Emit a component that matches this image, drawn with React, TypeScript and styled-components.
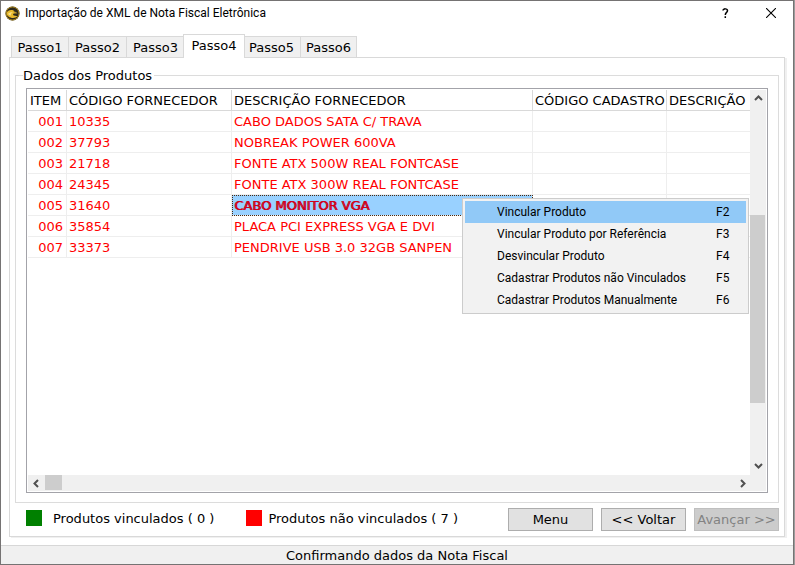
import React from "react";
import styled, { createGlobalStyle, css } from "styled-components";

const GlobalStyle = createGlobalStyle`
  *, *::before, *::after { box-sizing: border-box; }
  html, body, #root { height: 100%; margin: 0; }
  body { overflow: hidden; background: #a0a0a0; }
  body, button, table {
    font-family: "DejaVu Sans", Verdana, sans-serif;
    font-size: 13px;
    line-height: 18px;
    color: #000;
  }
`;

const Desktop = styled.div`
  height: 100%;
  padding-right: 1px;
  background: #9c9c9c;
`;

const Window = styled.main`
  display: flex;
  flex-direction: column;
  height: 100%;
  border: 1px solid #757373;
  background: #fff;
`;

const TitleBar = styled.header`
  display: flex;
  align-items: center;
  flex: none;
  height: 24px;
  padding-left: 4px;
  gap: 5px;
`;

const Title = styled.h1`
  flex: 1;
  margin: 0;
  font: 400 12px/16px Roboto, "Segoe UI", sans-serif;
  white-space: nowrap;
`;

const CaptionButton = styled.button`
  display: flex;
  align-items: center;
  justify-content: center;
  width: 45px;
  height: 24px;
  padding: 0;
  border: 0;
  background: none;
`;

const CaptionActions = styled.div`
  display: flex;
`;

const Body = styled.div`
  display: flex;
  flex-direction: column;
  flex: 1;
  min-height: 0;
  padding: 8px;
`;

const TabList = styled.div`
  display: flex;
  align-items: flex-end;
  flex: none;
  height: 24px;
  padding-left: 2px;
`;

const Tab = styled.button<{ $active: boolean }>`
  width: 58px;
  height: 21px;
  padding: 2px 0 0;
  border: 1px solid #d9d9d9;
  border-width: 1px 1px 0 0;
  background: #f0f0f0;
  white-space: nowrap;
  &:first-child { border-left-width: 1px; }
  &:last-child { width: 56px; }
  ${(p) =>
    p.$active &&
    css`
      z-index: 1;
      width: 62px;
      height: 24px;
      margin: 0 -2px -1px;
      padding: 0 0 1px;
      border-left-width: 1px;
      background: #fff;
    `}
`;

const TabPage = styled.section`
  display: flex;
  flex-direction: column;
  flex: 1;
  min-height: 0;
  padding: 8px 5px 5px;
  border: 1px solid #d9d9d9;
  box-shadow: 2px 1px 0 #f0f0f0;
`;

const Group = styled.fieldset`
  display: flex;
  flex: 1;
  min-width: 0;
  min-height: 0;
  margin: 0;
  padding: 4px 10px 9px;
  border: 1px solid #dcdcdc;
`;

const GroupTitle = styled.legend`
  margin-left: -3px;
  padding: 2px 2px 0 0;
  line-height: 16px;
`;

const Grid = styled.div`
  position: relative;
  display: grid;
  grid-template: minmax(0, 1fr) 16px / minmax(0, 1fr) 16px;
  flex: 1;
  min-width: 0;
  min-height: 0;
  padding: 1px;
  border: 1px solid #a3a3a9;
`;

const Viewport = styled.div`
  overflow: hidden;
`;

const Table = styled.table`
  width: 100%;
  table-layout: fixed;
  border-collapse: separate;
  border-spacing: 0;
`;

const Col = styled.col<{ $w?: number }>`
  width: ${(p) => (p.$w ? `${p.$w}px` : "auto")};
`;

const HeadCell = styled.th`
  height: 21px;
  padding: 2px 0 0 2px;
  border: solid #d9d9d9;
  border-width: 0 1px 1px 0;
  font-weight: 400;
  line-height: 18px;
  text-align: left;
  white-space: nowrap;
  &:last-child { border-right: 0; }
`;

const Cell = styled.td<{ $end?: boolean; $selected?: boolean }>`
  height: 21px;
  padding: ${(p) => (p.$end ? "2px 3px 0 0" : "2px 0 0 2px")};
  border: solid #eeeeee;
  border-width: 0 1px 1px 0;
  color: #f00;
  line-height: 18px;
  text-align: ${(p) => (p.$end ? "right" : "left")};
  white-space: nowrap;
  &:last-child { border-right: 0; }
  ${(p) =>
    p.$selected &&
    css`
      background: #99d1ff;
      color: #d4001a;
      text-shadow: 1px 0 0 #c00018;
      outline: 1px dotted #4a2a10;
      outline-offset: -1px;
    `}
`;

const ScrollBar = styled.div<{ $horizontal?: boolean }>`
  display: flex;
  flex-direction: ${(p) => (p.$horizontal ? "row" : "column")};
  padding-bottom: ${(p) => (p.$horizontal ? 0 : "2px")};
  background: #f0f0f0;
`;

const ScrollArrow = styled.button`
  display: flex;
  align-items: center;
  justify-content: center;
  flex: none;
  width: 16px;
  height: 16px;
  padding: 0;
  border: 0;
  background: none;
`;

const ScrollTrack = styled.div<{ $horizontal?: boolean }>`
  display: flex;
  flex-direction: ${(p) => (p.$horizontal ? "row" : "column")};
  flex: 1;
`;

const TrackSpace = styled.div<{ $grow: number }>`
  flex: ${(p) => p.$grow} 0 0;
`;

const ThumbY = styled.div`
  flex: 188 0 0;
  margin-right: 1px;
  background: #cdcdcd;
`;

const ThumbX = styled.div`
  width: 17px;
  height: 15px;
  margin-left: 1px;
  background: #cdcdcd;
`;

const Corner = styled.div`
  background: #f0f0f0;
`;

const Menu = styled.ul`
  position: absolute;
  top: 109px;
  left: 435px;
  width: 287px;
  margin: 0;
  padding: 2px;
  border: 1px solid #cccccc;
  background: #f2f2f2;
  list-style: none;
`;

const MenuItem = styled.button<{ $active: boolean }>`
  display: flex;
  align-items: center;
  width: 100%;
  height: 22px;
  padding: 0 0 0 32px;
  border: 0;
  background: ${(p) => (p.$active ? "#91c9f7" : "transparent")};
  font: 400 12px/16px Roboto, "Segoe UI", sans-serif;
  text-align: left;
`;

const MenuLabel = styled.span`
  flex: 1;
  white-space: nowrap;
`;

const Shortcut = styled.span`
  width: 30px;
`;

const Footer = styled.footer`
  display: flex;
  align-items: flex-start;
  flex: none;
  gap: 32px;
  margin-top: 5px;
  padding-left: 11px;
`;

const LegendItem = styled.div<{ $gap: number }>`
  display: flex;
  align-items: center;
  gap: ${(p) => p.$gap}px;
  height: 20px;
  white-space: nowrap;
`;

const LegendText = styled.span`
  padding-top: 2px;
`;

const Swatch = styled.span<{ $color: string }>`
  width: 16px;
  height: 16px;
  background: ${(p) => p.$color};
`;

const Actions = styled.div`
  display: flex;
  gap: 8px;
  margin-left: auto;
`;

const ActionButton = styled.button`
  width: 85px;
  height: 23px;
  padding: 0;
  border: 1px solid #adadad;
  background: #e1e1e1;
  white-space: nowrap;
  &:disabled {
    border-color: #bfbfbf;
    background: #cccccc;
    color: #838383;
  }
`;

const StatusBar = styled.div`
  flex: none;
  height: 19px;
  border-top: 1px solid #d7d7d7;
  background: #f0f0f0;
  line-height: 19px;
  text-align: center;
`;

const chevrons = {
  up: "M1 6 4.5 2.5 8 6",
  down: "M1 3 4.5 6.5 8 3",
  left: "M6 1 2.5 4.5 6 8",
  right: "M3 1 6.5 4.5 3 8",
};

function Arrow({ dir, label }: { dir: keyof typeof chevrons; label: string }) {
  return (
    <ScrollArrow type="button" aria-label={label}>
      <svg width="9" height="9" viewBox="0 0 9 9" fill="none" stroke="#505050" strokeWidth="2">
        <path d={chevrons[dir]} />
      </svg>
    </ScrollArrow>
  );
}

function AppIcon() {
  return (
    <svg width="15" height="15" viewBox="0 0 15 15" aria-hidden="true">
      <circle cx="7.5" cy="7.5" r="7" fill="#2e2a1c" />
      <circle cx="7.5" cy="7.5" r="6.5" fill="none" stroke="#a8841c" strokeWidth="1" />
      <path d="M1.5 7C2.5 4.500 5.500 3.500 8.500 4.500L12.500 7.200 9 7.500C7.800 7.800 7.800 8.800 8.800 9.500L12.500 10.300C10.500 12.500 6 12.500 3.500 10.500 2.200 9.500 1.500 8.500 1.500 7Z" fill="#e8b92a" />
      <path d="M3 7.800C4 6.500 6 6 8 6.200 6 7 5.500 8 6 9.500 4.500 9.500 3.500 9 3 7.800Z" fill="#f7e08a" />
      <path d="M8.500 5.500h2l1 .8H9.500Z" fill="#2e2a1c" />
    </svg>
  );
}

const tabs = ["Passo1", "Passo2", "Passo3", "Passo4", "Passo5", "Passo6"];

const columns = [
  { title: "ITEM", width: 39 },
  { title: "CÓDIGO FORNECEDOR", width: 165 },
  { title: "DESCRIÇÃO FORNECEDOR", width: 301 },
  { title: "CÓDIGO CADASTRO", width: 134 },
  { title: "DESCRIÇÃO" },
];

const products = [
  ["001", "10335", "CABO DADOS SATA C/ TRAVA"],
  ["002", "37793", "NOBREAK POWER 600VA"],
  ["003", "21718", "FONTE ATX 500W REAL FONTCASE"],
  ["004", "24345", "FONTE ATX 300W REAL FONTCASE"],
  ["005", "31640", "CABO MONITOR VGA"],
  ["006", "35854", "PLACA PCI EXPRESS VGA E DVI"],
  ["007", "33373", "PENDRIVE USB 3.0 32GB SANPEN"],
];

const menuItems = [
  ["Vincular Produto", "F2"],
  ["Vincular Produto por Referência", "F3"],
  ["Desvincular Produto", "F4"],
  ["Cadastrar Produtos não Vinculados", "F5"],
  ["Cadastrar Produtos Manualmente", "F6"],
];

export default function App() {
  return (
    <Desktop>
      <GlobalStyle />
      <Window>
        <TitleBar>
          <AppIcon />
          <Title>Importação de XML de Nota Fiscal Eletrônica</Title>
          <CaptionActions>
            <CaptionButton type="button" aria-label="Ajuda">
              <svg width="7" height="10" viewBox="0 0 7 10" fill="none" stroke="#000" strokeWidth="1.5">
                <path d="M1 2.500C1 .3 5.500.3 5.500 2.700 5.500 4.500 3.300 4.300 3.300 7M3.300 8.200V10" />
              </svg>
            </CaptionButton>
            <CaptionButton type="button" aria-label="Fechar">
              <svg width="10" height="10" viewBox="0 0 10 10" fill="none" stroke="#000" strokeWidth="1.1">
                <path d="M0 0 10 10M10 0 0 10" />
              </svg>
            </CaptionButton>
          </CaptionActions>
        </TitleBar>
        <Body>
          <TabList role="tablist">
            {tabs.map((t) => (
              <Tab key={t} type="button" role="tab" aria-selected={t === "Passo4"} $active={t === "Passo4"}>
                {t}
              </Tab>
            ))}
          </TabList>
          <TabPage role="tabpanel">
            <Group>
              <GroupTitle>Dados dos Produtos</GroupTitle>
              <Grid>
                <Viewport>
                  <Table>
                    <colgroup>
                      {columns.map((c) => (
                        <Col key={c.title} $w={c.width} />
                      ))}
                    </colgroup>
                    <thead>
                      <tr>
                        {columns.map((c) => (
                          <HeadCell key={c.title} scope="col">{c.title}</HeadCell>
                        ))}
                      </tr>
                    </thead>
                    <tbody>
                      {products.map(([item, code, description]) => (
                        <tr key={item}>
                          <Cell $end>{item}</Cell>
                          <Cell>{code}</Cell>
                          <Cell $selected={item === "005"}>{description}</Cell>
                          <Cell />
                          <Cell />
                        </tr>
                      ))}
                    </tbody>
                  </Table>
                </Viewport>
                <ScrollBar>
                  <Arrow dir="up" label="Rolar para cima" />
                  <ScrollTrack>
                    <TrackSpace $grow={109} />
                    <ThumbY />
                    <TrackSpace $grow={54} />
                  </ScrollTrack>
                  <Arrow dir="down" label="Rolar para baixo" />
                </ScrollBar>
                <ScrollBar $horizontal>
                  <Arrow dir="left" label="Rolar para a esquerda" />
                  <ScrollTrack $horizontal>
                    <ThumbX />
                  </ScrollTrack>
                  <Arrow dir="right" label="Rolar para a direita" />
                </ScrollBar>
                <Corner />
                <Menu role="menu">
                  {menuItems.map(([label, key], i) => (
                    <li key={key} role="none">
                      <MenuItem type="button" role="menuitem" $active={i === 0}>
                        <MenuLabel>{label}</MenuLabel>
                        <Shortcut>{key}</Shortcut>
                      </MenuItem>
                    </li>
                  ))}
                </Menu>
              </Grid>
            </Group>
            <Footer>
              <LegendItem $gap={11}>
                <Swatch $color="#008000" />
                <LegendText>Produtos vinculados ( 0 )</LegendText>
              </LegendItem>
              <LegendItem $gap={6}>
                <Swatch $color="#ff0000" />
                <LegendText>Produtos não vinculados ( 7 )</LegendText>
              </LegendItem>
              <Actions>
                <ActionButton type="button">Menu</ActionButton>
                <ActionButton type="button">&lt;&lt; Voltar</ActionButton>
                <ActionButton type="button" disabled>Avançar &gt;&gt;</ActionButton>
              </Actions>
            </Footer>
          </TabPage>
        </Body>
        <StatusBar role="status">Confirmando dados da Nota Fiscal</StatusBar>
      </Window>
    </Desktop>
  );
}
